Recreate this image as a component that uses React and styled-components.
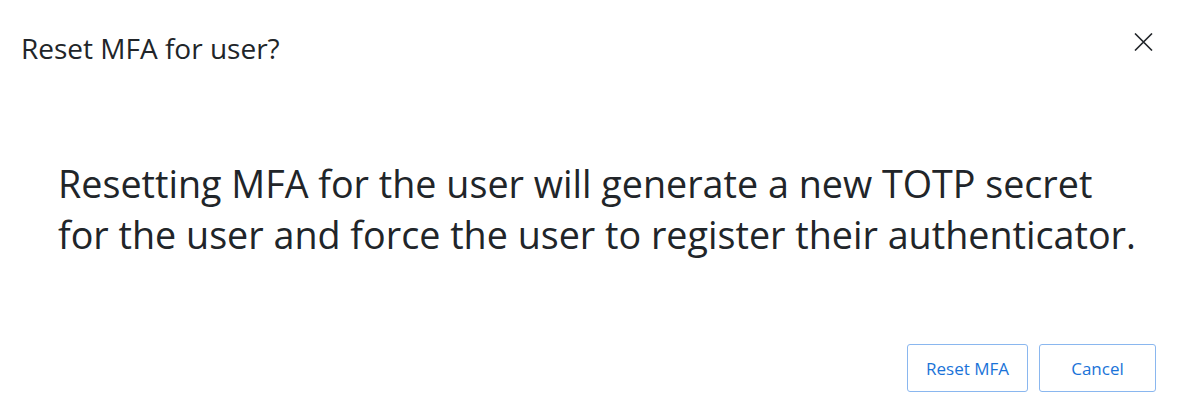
import styled, { createGlobalStyle } from 'styled-components';

const Global = createGlobalStyle`
    html, body {
        margin: 0;
        padding: 0;
        background: #fff;
    }
    body {
        font-family: "Open Sans", "Noto Sans", sans-serif;
        color: #212529;
    }
`;

const Dialog = styled.div`
    width: 1193px;
    height: 404px;
    box-sizing: border-box;
    display: flex;
    flex-direction: column;
    background: #fff;
`;

const Header = styled.div`
    display: flex;
    align-items: flex-start;
    justify-content: space-between;
    padding: 30px 38px 0 21px;
`;

const Title = styled.h5`
    margin: 1px 0 0;
    font-size: 28px;
    line-height: 34px;
    font-weight: 400;
    color: #212529;
`;

const CloseBtn = styled.button`
    border: 0;
    background: none;
    padding: 0;
    width: 24px;
    height: 24px;
    display: flex;
    align-items: center;
    justify-content: center;
    cursor: pointer;
`;

const Body = styled.div`
    padding: 93px 58px 0;
`;

const Message = styled.p`
    margin: 0;
    font-size: 37.7px;
    line-height: 51px;
    color: #212529;
    white-space: nowrap;
`;

const Footer = styled.div`
    margin-top: auto;
    display: flex;
    justify-content: flex-end;
    gap: 11px;
    padding: 0 37px 12px 0;
`;

const Button = styled.button`
    height: 48px;
    width: ${p => p.$w}px;
    border: 1px solid #8ab7ef;
    border-radius: 3px;
    background: #fff;
    color: #1a73d8;
    font-family: "Open Sans", "Noto Sans", sans-serif;
    font-size: 17px;
    cursor: pointer;
`;

export default function App() {
    return (
        <>
            <Global />
            <Dialog>
                <Header>
                    <Title>Reset MFA for user?</Title>
                    <CloseBtn aria-label="Close">
                        <svg width="19" height="18" viewBox="0 0 19 18">
                            <path d="M1 0.5L18 17.5M18 0.5L1 17.5" stroke="#212529" strokeWidth="1.6" />
                        </svg>
                    </CloseBtn>
                </Header>
                <Body>
                    <Message>
                        Resetting MFA for the user will generate a new TOTP secret
                        <br />
                        for the user and force the user to register their authenticator.
                    </Message>
                </Body>
                <Footer>
                    <Button $w={121}>Reset MFA</Button>
                    <Button $w={117}>Cancel</Button>
                </Footer>
            </Dialog>
        </>
    );
}
